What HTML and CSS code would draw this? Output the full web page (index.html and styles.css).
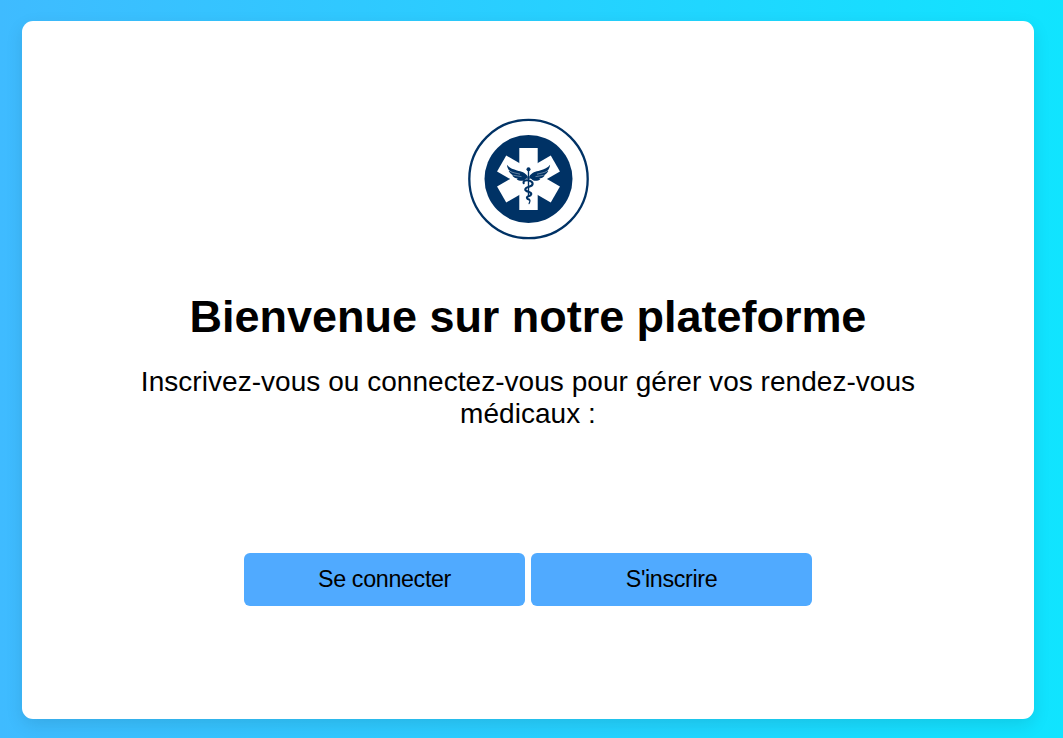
FILE: index.html
```html
<!DOCTYPE html>
<html lang="fr">
<head>
<meta charset="utf-8">
<title>Bienvenue</title>
<link rel="stylesheet" href="styles.css">
</head>
<body>
<main class="card">
  <svg class="logo" viewBox="-.5 0 122 122" role="img" aria-label="Logo médical">
    <circle class="ring" cx="61" cy="61" r="59.2"/>
    <circle class="navy" cx="61" cy="61" r="44"/>
    <g class="star">
      <rect x="51.8" y="30" width="18.4" height="62"/>
      <rect x="51.8" y="30" width="18.4" height="62" transform="rotate(60 61 61)"/>
      <rect x="51.8" y="30" width="18.4" height="62" transform="rotate(-60 61 61)"/>
    </g>
    <circle class="navy" cx="61" cy="51.2" r="2"/>
    <path class="navy" id="wing" d="M60.3 58.4C57.500 54 54 53.600 49.500 52.400C45.300 51.200 41.500 49.800 39.400 46.700C39.900 50 40.800 51.600 42.300 52.900L41.200 52.900C42.400 55.300 44 56.600 46 57.200L44.600 57.500C46.200 59.500 48 60.400 50.300 60.600L49.200 61.200C51.700 63.300 55.700 63.500 57.800 61.300C58.600 60.400 59.400 60.200 60.300 61.100Z"/>
    <use href="#wing" transform="matrix(-1 0 0 1 122 0)"/>
    <path class="feather" d="M42 53C45.500 55 49 55.200 52.500 56.200M46 57.300C49 58.200 51.500 57.900 54 58.600M80 53C76.500 55 73 55.200 69.500 56.200M76 57.300C73 58.200 70.500 57.900 68 58.600"/>
    <path class="staff" d="M61 51V79"/>
    <path class="snake" d="M56.200 65.200C55.200 62.400 59 61.900 61.500 62.600C66.200 64.200 66.500 67.300 61.500 68.700C56.700 70 56.500 72.500 61 73.700C65.300 75 64 77.500 61 78.300C58.500 79.100 59.300 80.900 61.500 81.400"/>
    <path class="tail" d="M61.500 81.400C63.500 82.300 62.300 83.700 61.600 85.600"/>
  </svg>
  <h1 class="title">Bienvenue sur notre plateforme</h1>
  <p class="intro">Inscrivez-vous ou connectez-vous pour gérer vos rendez-vous médicaux :</p>
  <div class="actions">
    <button class="button" type="button">Se connecter</button>
    <button class="button" type="button">S'inscrire</button>
  </div>
</main>
</body>
</html>
```
FILE: styles.css
```css
* { box-sizing: border-box; }
body {
  margin: 0;
  height: 738px;
  padding: 21px 29px 19px 22px;
  overflow: hidden;
  font-family: "Liberation Sans", Arial, sans-serif;
  color: #000;
  background: linear-gradient(to right, #3fbbff, #10e4ff);
}
.card {
  display: flex;
  flex-direction: column;
  align-items: center;
  height: 698px;
  padding: 97px 112px 0;
  border-radius: 11px;
  background: #fff;
  box-shadow: 0 6px 17px rgba(0, 0, 0, .1);
}
.logo { display: block; width: 122px; height: 122px; }
.ring { fill: none; stroke: #003265; stroke-width: 2.3; }
.navy { fill: #003265; }
.star { fill: #fff; }
.feather { fill: none; stroke: #fff; stroke-width: .4; }
.staff { stroke: #003265; stroke-width: 1.4; }
.snake, .tail { fill: none; stroke: #003265; stroke-width: 2.1; stroke-linecap: round; }
.tail { stroke-width: 1.2; }
.title {
  margin: 51px 0 0;
  font-size: 45px;
  line-height: 52px;
  letter-spacing: -.03px;
  white-space: nowrap;
}
.intro {
  width: 788px;
  margin: 23px 0 0;
  font-size: 28px;
  line-height: 32px;
  letter-spacing: .04px;
  text-align: center;
}
.actions { display: flex; gap: 6px; margin-top: 123px; }
.button {
  width: 281px;
  height: 53px;
  padding: 0 0 1px;
  border: 0;
  border-radius: 6px;
  background: #50aaff;
  color: #000;
  font: 23.3px "Liberation Sans", Arial, sans-serif;
  letter-spacing: -.35px;
}
```
